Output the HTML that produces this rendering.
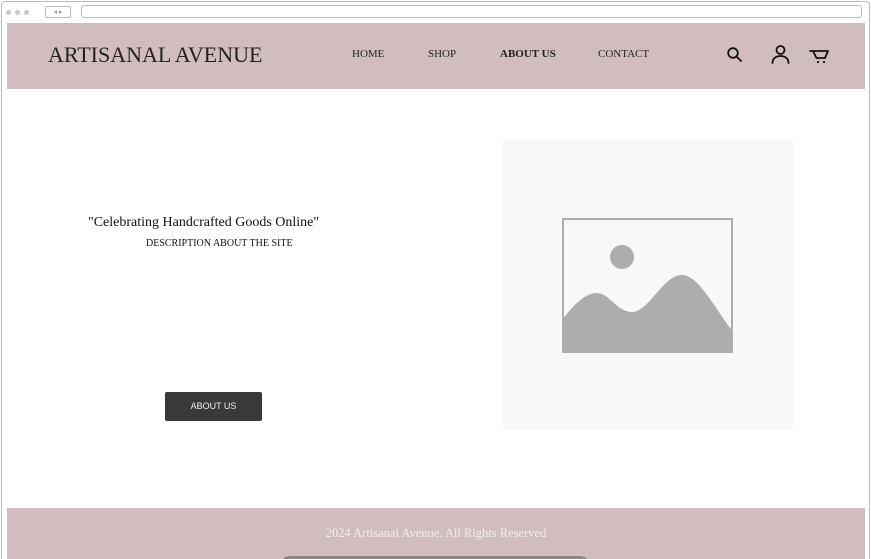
<!DOCTYPE html>
<html><head><meta charset="utf-8"><style>
*{margin:0;padding:0;box-sizing:border-box}
html,body{width:871px;height:559px;overflow:hidden}
body{background:#fff;font-family:"Liberation Serif",serif;position:relative}
.frame{position:absolute;left:1px;top:1px;width:869px;height:570px;border:1px solid #bdbdbd;border-radius:4px}
.dot{position:absolute;top:10px;width:5px;height:5px;border-radius:50%;background:#c8c8c8}
.nav{position:absolute;left:45px;top:6px;width:26px;height:12px;border:1px solid #bbb;border-radius:2px;font-size:7px;color:#999;text-align:center;line-height:10px}
.url{position:absolute;left:81px;top:5px;width:781px;height:13px;border:1px solid #bbb;border-radius:3px}
header{position:absolute;left:7px;top:23px;width:858px;height:66px;background:#d1bdbf}
.logo{position:absolute;left:41px;top:19px;font-size:22px;color:#222}
.m{position:absolute;top:25px;font-size:11px;color:#222}
footer{position:absolute;left:7px;top:508px;width:858px;height:60px;background:#d1bdbf;color:#f4eeee;font-size:12.5px;text-align:center;padding-top:18px}
</style></head><body>
<div class="frame"></div>
<div class="dot" style="left:6px"></div><div class="dot" style="left:15px"></div><div class="dot" style="left:24px"></div>
<div class="nav">◂ ▸</div><div class="url"></div>
<header>
<div class="logo">ARTISANAL AVENUE</div>
<div class="m" style="left:345px">HOME</div>
<div class="m" style="left:421px">SHOP</div>
<div class="m" style="left:493px;font-weight:bold">ABOUT US</div>
<div class="m" style="left:591px">CONTACT</div>
</header>
<svg style="position:absolute;left:0;top:0" width="871" height="100" viewBox="0 0 871 100" fill="none" stroke="#111" stroke-width="1.8" stroke-linecap="round" stroke-linejoin="round">
<circle cx="733" cy="53" r="4.8"/><path d="M736.5 56.5L741 61"/>
<circle cx="780.5" cy="50" r="4"/><path d="M772.5 63c0-4.5 3.5-7 8-7s8 2.5 8 7"/>
<path d="M810 51h3l3.5 7h8.5l3-7h-14.5"/><circle cx="818" cy="62" r="1.1" fill="#111" stroke="none"/><circle cx="824" cy="62" r="1.1" fill="#111" stroke="none"/>
</svg>
<div style="position:absolute;left:88px;top:215px;font-size:14px;color:#111">"Celebrating Handcrafted Goods Online"</div>
<div style="position:absolute;left:146px;top:238px;font-size:10px;color:#111">DESCRIPTION ABOUT THE SITE</div>
<div style="position:absolute;left:165px;top:392px;width:97px;height:29px;background:#393939;border-radius:2px;color:#eee;font-family:'Liberation Sans',sans-serif;font-size:9px;text-align:center;line-height:29px">ABOUT US</div>
<svg style="position:absolute;left:503px;top:140px" width="290" height="290" viewBox="0 0 290 290">
<rect width="290" height="290" fill="#f8f8f8"/>
<rect x="60" y="79" width="169" height="133" fill="none" stroke="#adadad" stroke-width="2"/>
<circle cx="119" cy="117" r="12" fill="#adadad"/>
<path d="M59 180C72 163 83 153 94 153C106 153 114 172 129 172C146 172 160 135 179 135C195 135 210 165 230 192V213H59Z" fill="#adadad"/>
</svg>
<footer>2024 Artisanal Avenue. All Rights Reserved</footer>
<div style="position:absolute;left:280px;top:556px;width:310px;height:20px;border-radius:10px;background:#8e8385"></div>
</body></html>
